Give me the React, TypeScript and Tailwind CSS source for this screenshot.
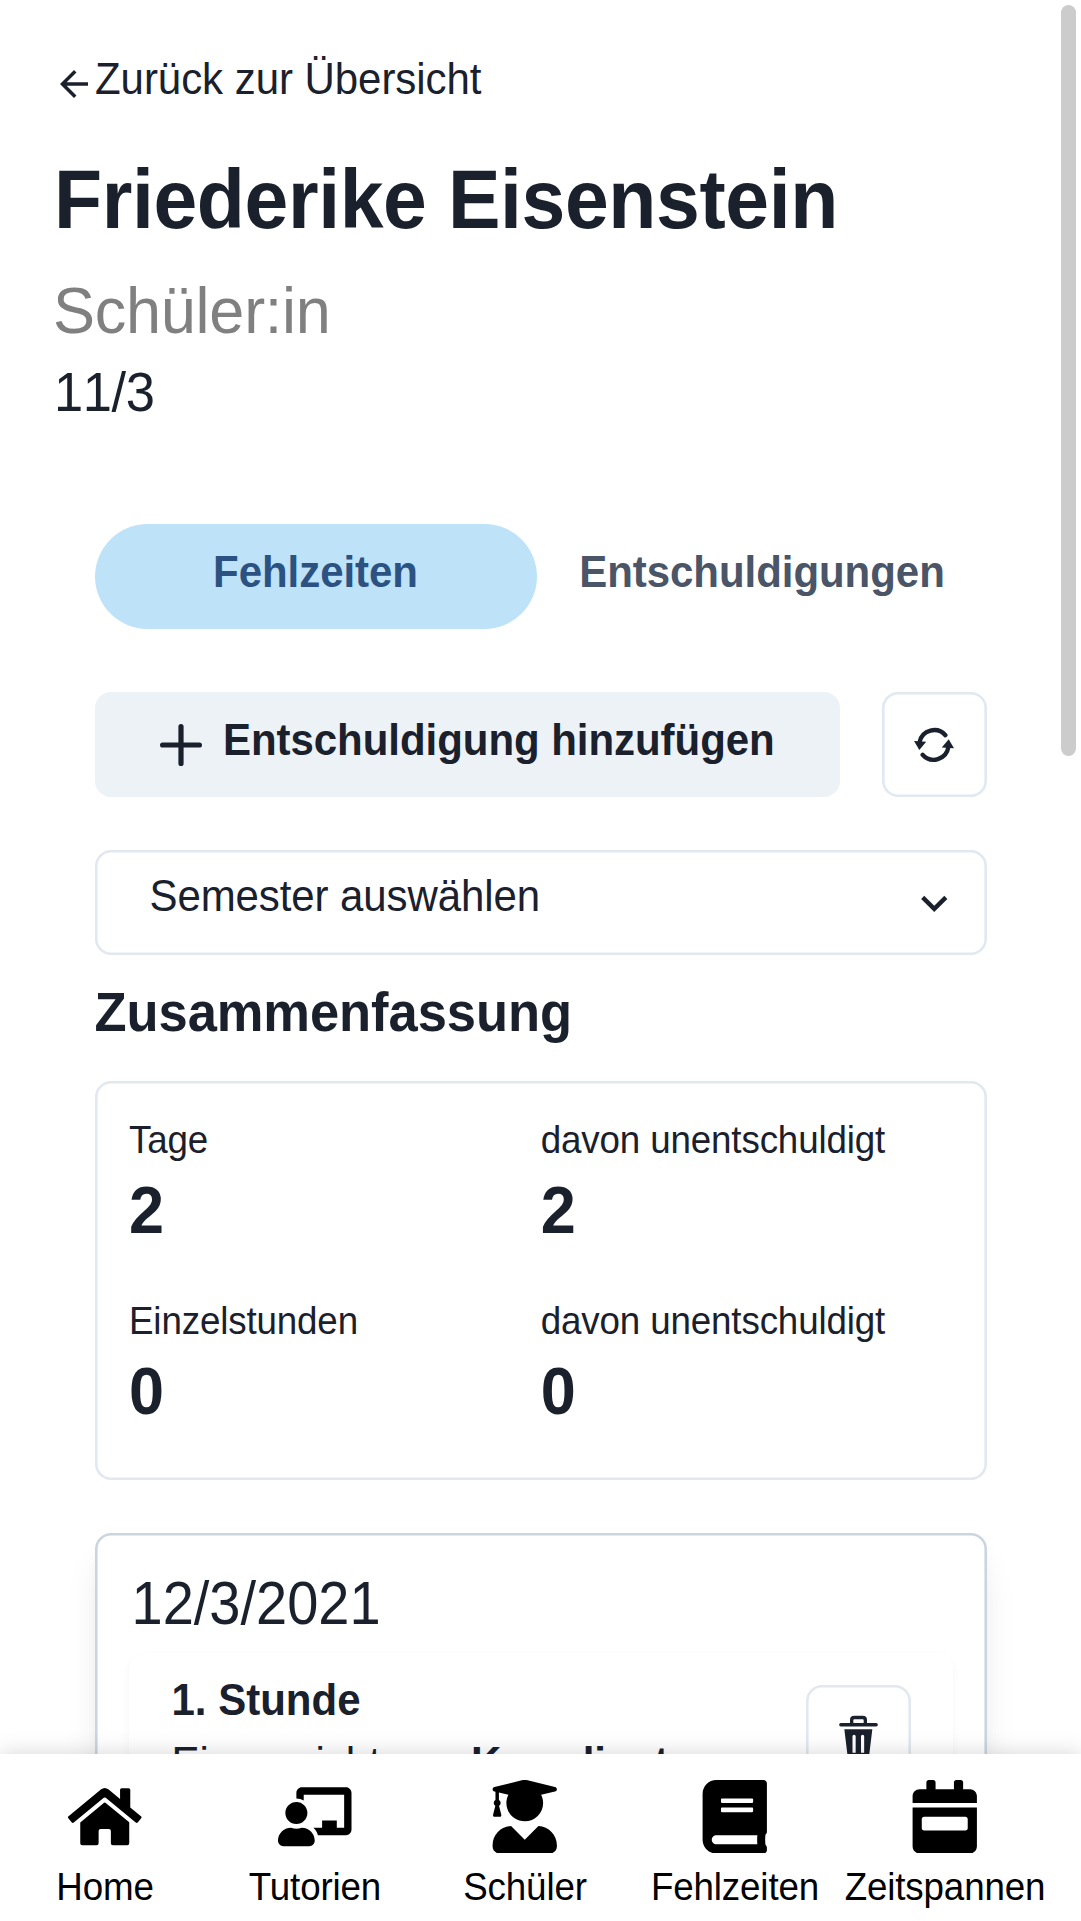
import type { ReactNode } from "react";
import { FaHome, FaChalkboardTeacher, FaUserGraduate, FaBook, FaCalendarWeek } from "react-icons/fa";
import { MdArrowBack, MdKeyboardArrowDown } from "react-icons/md";

function PlusIcon() {
  return (
    <svg className="size-[42px]" viewBox="0 0 42 42" fill="none" stroke="currentColor" strokeWidth="5.2" strokeLinecap="round">
      <path d="M21 2.6v36.8M2.6 21h36.8" />
    </svg>
  );
}

function RefreshIcon() {
  return (
    <svg className="h-[37px] w-[42px]" viewBox="130 140 127 112" fill="none" stroke="currentColor" strokeWidth="13" strokeLinecap="round">
      <path d="M150 188A45 45 0 0 1 228 168" />
      <path d="M159 227A45 45 0 0 0 237 204" />
      <path d="M133 185.500L170 188L149 213Z" fill="currentColor" stroke="none" />
      <path d="M254 207L217 205L238 180Z" fill="currentColor" stroke="none" />
    </svg>
  );
}

function TrashIcon() {
  return (
    <svg className="h-[44px] w-[39px]" viewBox="147 137 117 132" fill="currentColor">
      <rect x="147.500" y="161" width="116" height="10.500" rx="5" />
      <path d="M185 163V152Q185 144.500 193 144.500H218Q226 144.500 226 152V163" fill="none" stroke="currentColor" strokeWidth="10" />
      <path
        fillRule="evenodd"
        d="M163 180H247L237 262Q236 268 230 268H180Q174 268 173 262ZM187.500 201V250H197V201Q197 196 192 196Q187.500 196 187.500 201ZM213 201V250H222.500V201Q222.500 196 218 196Q213 196 213 201Z"
      />
    </svg>
  );
}

function Stat({ label, value }: { label: string; value: number }) {
  return (
    <div className="h-[181px]">
      <div className="origin-[0_73%] scale-y-[1.06] text-[36.75px] leading-[55px] tracking-[-0.15px]">{label}</div>
      <div className="mt-[1px] origin-[0_76%] scale-y-[1.06] text-[63px] font-bold leading-[84px]">{value}</div>
    </div>
  );
}

function NavItem({ icon, label }: { icon: ReactNode; label: string }) {
  return (
    <a className="flex w-[210px] shrink-0 flex-col items-center pt-[25.5px] text-[73.5px]">
      {icon}
      <span className="mt-[6.500px] origin-[0_73%] scale-y-[1.05] text-[36.75px] leading-[55px] tracking-[-0.15px]">{label}</span>
    </a>
  );
}

export default function App() {
  return (
    <div className="relative flex h-[1921px] w-[1081px] flex-col overflow-hidden bg-white font-['Nimbus_Sans','Liberation_Sans',Arial,sans-serif] text-[42px] text-[#1A202C]">
      <main className="h-[1754px] shrink-0 overflow-hidden">
        <header className="h-[524px] pl-[53px] pt-[47px]">
          <a className="flex h-[63px] items-center">
            <MdArrowBack className="mt-[10px]" />
            <span className="mt-[2px] origin-[0_73%] scale-y-[1.06] leading-[63px] tracking-[-0.05px]">Zurück zur Übersicht</span>
          </a>
          <h1 className="ml-[1px] mt-[44px] origin-[0_79%] scale-y-[1.06] text-[78.75px] font-bold leading-[95px] tracking-[-0.4px]">
            Friederike Eisenstein
          </h1>
          <p className="mt-[15px] origin-[0_73%] scale-y-[1.03] text-[63px] leading-[95px] tracking-[-0.25px] text-[#808080]">Schüler:in</p>
          <p className="mt-[-1px] ml-[1px] origin-[0_76%] scale-y-[1.06] text-[52.5px] leading-[70px] tracking-[-0.4px] [font-kerning:none]">11/3</p>
        </header>

        <div className="ml-[94.5px] w-[892.5px]">
          <div className="flex h-[105px] font-bold tracking-[-0.05px]">
            <button className="w-[442px] rounded-full bg-[#BEE3F8] pb-[8px] text-[#2C5282]">
              <span className="inline-block origin-[0_73%] scale-y-[1.06]">Fehlzeiten</span>
            </button>
            <button className="w-[450px] pb-[8px] pl-[1px] text-[#4A5568]">
              <span className="inline-block origin-[0_73%] scale-y-[1.06]">Entschuldigungen</span>
            </button>
          </div>

          <div className="mt-[63px] flex h-[105px] justify-between">
            <button className="flex w-[745px] items-center rounded-[16px] bg-[#EDF2F7] pl-[65.5px] pt-[1px] font-bold">
              <PlusIcon />
              <span className="mb-[9px] ml-[21px] origin-[0_73%] scale-y-[1.06] tracking-[-0.05px]">Entschuldigung hinzufügen</span>
            </button>
            <button className="flex w-[105px] items-center justify-center rounded-[16px] pr-[1px] shadow-[inset_0_0_0_2.6px_#E2E8F0]">
              <RefreshIcon />
            </button>
          </div>

          <button className="mt-[53px] flex h-[105px] w-full items-center justify-between rounded-[16px] pl-[55px] pr-[27px] shadow-[inset_0_0_0_2.6px_#E2E8F0]">
            <span className="mb-[13px] origin-[0_73%] scale-y-[1.06] tracking-[-0.1px]">Semester auswählen</span>
            <MdKeyboardArrowDown className="mt-[1px] text-[52.5px]" />
          </button>

          <h2 className="mt-[26px] origin-[0_79%] scale-y-[1.06] text-[52.5px] font-bold leading-[63px] tracking-[-0.07px]">Zusammenfassung</h2>
          <section className="mt-[37px] grid h-[399px] grid-cols-2 content-start rounded-[16px] px-[34.5px] pt-[32px] shadow-[inset_0_0_0_2.6px_#E2E8F0]">
            <Stat label="Tage" value={2} />
            <Stat label="davon unentschuldigt" value={2} />
            <Stat label="Einzelstunden" value={0} />
            <Stat label="davon unentschuldigt" value={0} />
          </section>

          <section className="mt-[52.5px] h-[500px] rounded-[16px] px-[34px] pt-[32px] shadow-[inset_0_0_0_2.6px_#CBD5E0,0_26px_39px_-8px_rgba(0,0,0,0.1),0_10px_16px_-5px_rgba(0,0,0,0.05)]">
            <h3 className="ml-[3px] origin-[0_74%] scale-y-[1.09] text-[56px] leading-[80px]">12/3/2021</h3>
            <div className="mt-[8px] flex h-[300px] justify-between rounded-[16px] px-[42px] pt-[16px] shadow-[0_3px_8px_rgba(0,0,0,0.04)]">
              <div className="ml-[1px]">
                <div className="origin-[0_73%] scale-y-[1.05] font-bold leading-[63px]">1. Stunde</div>
                <div className="origin-[0_73%] scale-y-[1.06] whitespace-nowrap leading-[63px] tracking-[-0.1px]">
                  Eingereicht von <b>Koordinator</b>
                </div>
              </div>
              <button className="mt-[16px] flex size-[105px] items-center justify-center rounded-[16px] shadow-[inset_0_0_0_2.6px_#E2E8F0]">
                <TrashIcon />
              </button>
            </div>
          </section>
        </div>
      </main>

      <nav className="z-10 flex h-[167px] shrink-0 bg-white text-black shadow-[0_0_21px_rgba(0,0,0,0.17)]">
        <NavItem icon={<FaHome />} label="Home" />
        <NavItem icon={<FaChalkboardTeacher />} label="Tutorien" />
        <NavItem icon={<FaUserGraduate />} label="Schüler" />
        <NavItem icon={<FaBook />} label="Fehlzeiten" />
        <NavItem icon={<FaCalendarWeek />} label="Zeitspannen" />
      </nav>

      <div className="absolute right-[5px] top-[5px] h-[751px] w-[15px] rounded-full bg-[#CCCCCC]" />
    </div>
  );
}
